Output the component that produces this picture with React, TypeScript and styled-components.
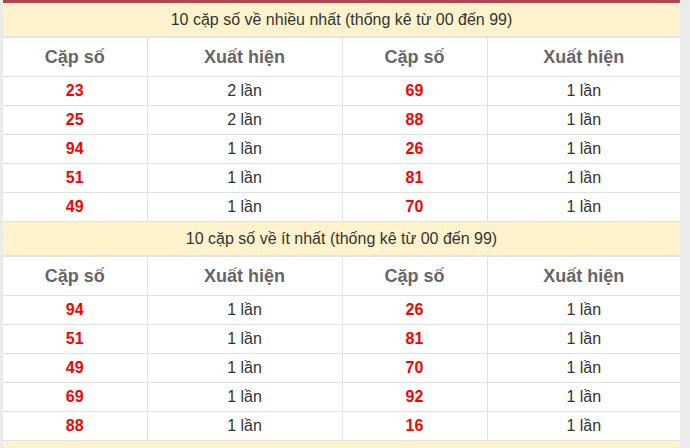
import React from "react";
import styled, { createGlobalStyle } from "styled-components";

const Global = createGlobalStyle`
  html, body { margin: 0; padding: 0; background: #ebebeb; }
  body { font-family: "Liberation Sans", Arial, sans-serif; }
`;

const Page = styled.div`
  display: flex;
  width: 690px;
  height: 448px;
  overflow: hidden;
  padding-left: 3px;
  box-sizing: border-box;
`;

const Panel = styled.div`
  width: 677px;
  background: #fff;
  border-top: 3px solid #b0474f;
  align-self: flex-start;
`;

const Table = styled.table`
  width: 100%;
  border-collapse: collapse;
  table-layout: fixed;
`;

const TitleCell = styled.td`
  height: 33px;
  padding: 0;
  background: #fff3cd;
  color: #333;
  font-size: 16px;
  text-align: center;
  border-bottom: 2px solid #e4e4e4;
`;

const HeadCell = styled.th<{ $first?: boolean }>`
  height: 38px;
  padding: 0;
  color: #666;
  font-size: 18px;
  font-weight: bold;
  text-align: center;
  border-bottom: 1px solid #e2e2e2;
  border-left: ${(p) => (p.$first ? "none" : "1px solid #e2e2e2")};
`;

const Cell = styled.td<{ $first?: boolean; $num?: boolean }>`
  height: 28px;
  padding: 0;
  text-align: center;
  font-size: 16px;
  color: ${(p) => (p.$num ? "#ff0000" : "#333")};
  font-weight: ${(p) => (p.$num ? "bold" : "normal")};
  border-bottom: 1px solid #e2e2e2;
  border-left: ${(p) => (p.$first ? "none" : "1px solid #e2e2e2")};
`;

type Pair = [string, string, string, string];

const most: Pair[] = [
  ["23", "2 lần", "69", "1 lần"],
  ["25", "2 lần", "88", "1 lần"],
  ["94", "1 lần", "26", "1 lần"],
  ["51", "1 lần", "81", "1 lần"],
  ["49", "1 lần", "70", "1 lần"],
];

const least: Pair[] = [
  ["94", "1 lần", "26", "1 lần"],
  ["51", "1 lần", "81", "1 lần"],
  ["49", "1 lần", "70", "1 lần"],
  ["69", "1 lần", "92", "1 lần"],
  ["88", "1 lần", "16", "1 lần"],
];

const Section = ({ title, rows }: { title: string; rows: Pair[] }) => (
  <>
    <tr>
      <TitleCell colSpan={4}>{title}</TitleCell>
    </tr>
    <tr>
      <HeadCell $first>Cặp số</HeadCell>
      <HeadCell>Xuất hiện</HeadCell>
      <HeadCell>Cặp số</HeadCell>
      <HeadCell>Xuất hiện</HeadCell>
    </tr>
    {rows.map((r, i) => (
      <tr key={i}>
        <Cell $first $num>{r[0]}</Cell>
        <Cell>{r[1]}</Cell>
        <Cell $num>{r[2]}</Cell>
        <Cell>{r[3]}</Cell>
      </tr>
    ))}
  </>
);

export default function App() {
  return (
    <>
      <Global />
      <Page>
        <Panel>
          <Table>
            <colgroup>
              <col style={{ width: 144 }} />
              <col style={{ width: 195 }} />
              <col style={{ width: 145 }} />
              <col style={{ width: 193 }} />
            </colgroup>
            <tbody>
              <Section title="10 cặp số về nhiều nhất (thống kê từ 00 đến 99)" rows={most} />
              <Section title="10 cặp số về ít nhất (thống kê từ 00 đến 99)" rows={least} />
              <tr>
                <TitleCell colSpan={4} />
              </tr>
            </tbody>
          </Table>
        </Panel>
      </Page>
    </>
  );
}
